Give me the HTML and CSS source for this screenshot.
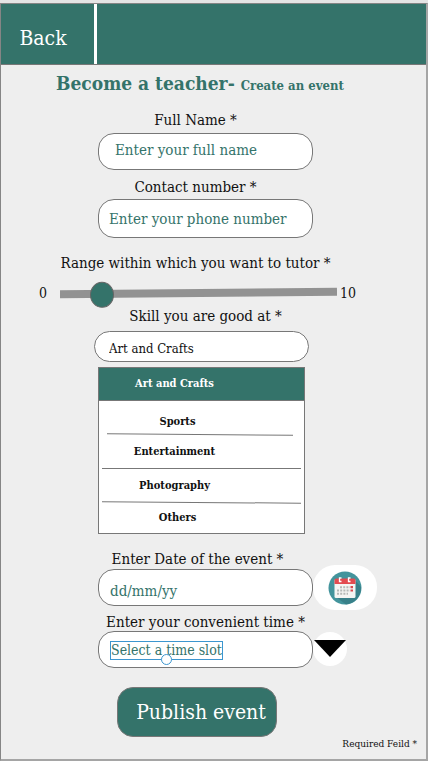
FILE: index.html
```html
<!DOCTYPE html>
<html lang="en">
<head>
<meta charset="utf-8">
<meta name="viewport" content="width=device-width, initial-scale=1">
<title>Become a teacher</title>
<link rel="stylesheet" href="styles.css">
</head>
<body>
<div class="page">
  <header class="bar">
    <button class="back" type="button">Back</button>
  </header>
  <main>
    <h1 class="title">Become a teacher- <small>Create an event</small></h1>
    <form class="form">
      <label class="label shift" for="name">Full Name *</label>
      <input class="field name" id="name" type="text" placeholder="Enter your full name">

      <label class="label shift phone-label" for="phone">Contact number *</label>
      <input class="field phone" id="phone" type="text" placeholder="Enter your phone number">

      <label class="label wide" for="range">Range within which you want to tutor *</label>
      <div class="range-row">
        <span class="min">0</span>
        <input class="range" id="range" type="range" min="0" max="10" step="0.1" value="1.2">
        <span>10</span>
      </div>

      <label class="label" for="skill">Skill you are good at *</label>
      <input class="field skill" id="skill" type="text" value="Art and Crafts">
      <ul class="options">
        <li><button class="option active" type="button">Art and Crafts</button></li>
        <li class="short-rule"><button class="option first" type="button">Sports</button></li>
        <li class="rule"><button class="option" type="button">Entertainment</button></li>
        <li class="rule tilted"><button class="option" type="button">Photography</button></li>
        <li><button class="option last" type="button">Others</button></li>
      </ul>

      <label class="label date-label" for="date">Enter Date of the event *</label>
      <input class="field date" id="date" type="text" placeholder="dd/mm/yy">
      <button class="calendar" type="button" aria-label="Open calendar">
        <svg width="34" height="34" viewBox="0 0 34 34" aria-hidden="true">
          <circle cx="17" cy="17" r="16.5" fill="#43949c"/>
          <path d="M27 9 33 16A16.500 16.500 0 0 1 18 33.400L8 26Z" fill="#388089"/>
          <rect x="6.500" y="8" width="21" height="19" rx="1.500" fill="#f5f5f3"/>
          <path d="M8 7.500H26Q27.500 7.500 27.500 9V13H6.500V9Q6.500 7.500 8 7.500Z" fill="#e34b50"/>
          <path d="M13.500 7H11.500V10.500H13.500M22.500 7H20.500V10.500H22.500" fill="none" stroke="#fff" stroke-width="1.300"/>
          <path d="M12 16.200H22M9 19.500H22M9 22.800H20" stroke="#b6b9b7" stroke-width="2" stroke-dasharray="2 1.200"/>
          <path d="M22.500 16.200H25M22.500 19.500H25" stroke="#d9484e" stroke-width="2.200"/>
        </svg>
      </button>

      <label class="label time-label" for="time">Enter your convenient time *</label>
      <div class="field time">
        <div class="selection">
          <select class="slot" id="time"><option>Select a time slot</option></select>
          <span class="handle"></span>
        </div>
      </div>
      <button class="drop" type="button" aria-label="Show time slots">
        <svg width="32" height="18" viewBox="0 0 32 18" aria-hidden="true"><path d="M0 0H32L16 17Z" fill="#000"/></svg>
      </button>

      <button class="publish" type="submit">Publish event</button>
      <p class="required">Required Feild *</p>
    </form>
  </main>
</div>
</body>
</html>
```
FILE: styles.css
```css
* {
  box-sizing: border-box;
}

body {
  margin: 0;
  padding-top: 3px;
  background: #e4e4e4;
  color: #111;
  font-family: "DejaVu Serif Condensed", "DejaVu Serif", serif;
  font-size: 15px;
  line-height: 20px;
}

button, input, select {
  margin: 0;
  padding: 0;
  border: 0;
  background: none;
  color: inherit;
  font: inherit;
}

.page {
  border: 1px solid #858585;
  border-right: 2px solid #a5a5a5;
  border-bottom: 2px solid #a5a5a5;
  background: #eee;
}

.bar {
  display: flex;
  height: 61px;
  border-bottom: 1px solid #777;
  background: #34736a;
}

.back {
  width: 96px;
  padding: 8px 9px 0 0;
  border-right: 3px solid #fff;
  color: #fff;
  font-size: 21px;
}

.title {
  margin: 4px 0 0 55px;
  color: #34736a;
  font-size: 19px;
  line-height: 28px;
}

.title small {
  font-size: 13px;
}

.form {
  display: grid;
  grid-template-columns: 97fr 215fr 113fr;
  padding-top: 10px;
}

.label {
  grid-column: 2;
  justify-self: center;
  white-space: nowrap;
}

.shift {
  padding-right: 20px;
}

.wide {
  grid-column: 1 / -1;
  margin-top: 15px;
  padding-right: 36px;
}

.field {
  grid-column: 2;
  width: 100%;
  min-width: 0;
  height: 37px;
  padding: 0 11px;
  border: 1px solid #777;
  border-radius: 16px;
  background: #fff;
}

.field::placeholder {
  color: #34736a;
  opacity: 1;
}

.name {
  margin-top: 3px;
  padding: 0 0 4px 16px;
}

.phone-label {
  margin-top: 7px;
}

.phone {
  height: 39px;
  margin-top: 2px;
  padding-left: 10px;
}

.range-row {
  display: flex;
  grid-column: 1 / -1;
  align-items: center;
  height: 33px;
  padding: 6px 70px 0 38px;
  font-size: 14px;
}

.min {
  width: 21px;
}

.range {
  flex: 1;
  min-width: 0;
  height: 26px;
  margin-right: 3px;
  appearance: none;
  transform: rotate(-0.5deg);
}

.range::-webkit-slider-runnable-track {
  height: 8px;
  background: #929292;
}

.range::-webkit-slider-thumb {
  width: 24px;
  height: 26px;
  margin-top: -8px;
  border: 1px solid #666;
  border-radius: 50%;
  appearance: none;
  background: #34736a;
}

.skill {
  position: relative;
  left: -4px;
  height: 31px;
  margin-top: 5px;
  padding: 4px 14px 0;
  font-size: 13px;
}

.options {
  grid-column: 2;
  margin: 5px 8px 0 0;
  padding: 0;
  border: 1px solid #777;
  background: #fff;
  list-style: none;
  font-size: 11px;
  font-weight: bold;
}

.rule::after,
.short-rule::after {
  display: block;
  height: 1px;
  margin: 0 3px;
  background: #777;
  content: "";
}

.short-rule::after {
  margin: 0 11px 0 8px;
  transform: rotate(0.4deg);
}

.tilted::after {
  transform: rotate(0.4deg);
}

.option {
  display: block;
  width: 100%;
  height: 33px;
  padding-right: 54px;
}

.active {
  border-bottom: 1px solid #777;
  background: #34736a;
  color: #fff;
}

.first {
  padding: 8px 48px 0 0;
}

.last {
  height: 30px;
  padding-right: 48px;
}

.date-label {
  margin-top: 15px;
  padding-right: 16px;
}

.date {
  padding-top: 6px;
}

.calendar {
  grid-column: 3;
  width: 64px;
  height: 45px;
  margin: -4px 0;
  border-radius: 22px;
  background: #fff;
}

.calendar svg,
.drop svg {
  display: block;
  margin: auto;
}

.time-label {
  margin-top: 6px;
}

.time {
  margin-top: -1px;
  padding-top: 9px;
}

.selection {
  position: relative;
  width: fit-content;
  border: 1px solid #3c96cf;
}

.slot {
  display: block;
  height: 17px;
  appearance: none;
  color: #34736a;
  font-size: 14px;
  line-height: 17px;
}

.handle {
  position: absolute;
  bottom: -6px;
  left: 50%;
  width: 11px;
  height: 11px;
  margin-left: -6px;
  border: 1px solid #3c96cf;
  border-radius: 50%;
  background: #fff;
}

.drop {
  grid-column: 3;
  width: 34px;
  height: 34px;
  border-radius: 50%;
  background: #fff;
}

.publish {
  grid-column: 2;
  height: 50px;
  margin: 19px 36px 0 19px;
  padding-left: 8px;
  border: 1px solid #777;
  border-radius: 16px;
  background: #34736a;
  color: #fff;
  font-size: 21px;
  white-space: nowrap;
}

.required {
  grid-column: 1 / -1;
  justify-self: end;
  margin: -3px 9px 5px 0;
  font-size: 10px;
}
```
